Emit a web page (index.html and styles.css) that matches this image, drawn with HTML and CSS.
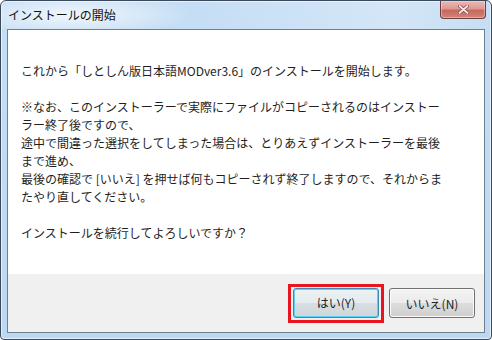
FILE: index.html
```html
<!DOCTYPE html>
<html lang="ja">
<head>
    <meta charset="UTF-8">
    <title>インストールの開始</title>
    <link rel="stylesheet" href="styles.css">
</head>
<body>
    <div class="window">
        <header class="titlebar">
            <span class="title">インストールの開始</span>
            <div class="close">
                <svg width="11" height="9" viewBox="0 0 11 9">
                    <path d="M1.5 1 L9.5 8 M9.5 1 L1.5 8" stroke="#8a4a45" stroke-width="3.4" stroke-linecap="round"/>
                    <path d="M1.5 1 L9.5 8 M9.5 1 L1.5 8" stroke="#f4e9e8" stroke-width="1.8" stroke-linecap="round"/>
                </svg>
            </div>
        </header>

        <main class="client">
            <div class="message">
                <p>これから「しとしん版日本語MODver3.6」のインストールを開始します。</p>
                <p>※なお、このインストーラーで実際にファイルがコピーされるのはインストー<br>ラー終了後ですので、<br>途中で間違った選択をしてしまった場合は、とりあえずインストーラーを最後<br>まで進め、<br>最後の確認で [いいえ] を押せば何もコピーされず終了しますので、それからま<br>たやり直してください。</p>
                <p>インストールを続行してよろしいですか？</p>
            </div>

            <div class="footer">
                <span class="highlight">
                    <button class="btn btn-default">はい(Y)</button>
                </span>
                <button class="btn">いいえ(N)</button>
            </div>
        </main>
    </div>
</body>
</html>
```

FILE: styles.css
```css
body {
    margin: 0;
    font-family: "Noto Sans CJK JP", "Noto Sans", sans-serif;
    font-size: 12px;
}

.window {
    width: 492px;
    height: 340px;
    box-sizing: border-box;
    border: 1px solid #3a4a5a;
    border-radius: 6px 6px 4px 4px;
    background: linear-gradient(#c6def5, #bcd8f2);
    box-shadow: inset 0 0 0 1px #e4f0fb;
    display: flex;
    flex-direction: column;
    overflow: hidden;
}

.titlebar {
    height: 28px;
    display: flex;
    justify-content: space-between;
    align-items: flex-start;
    background:
        radial-gradient(ellipse 120px 22px at 70px 14px, rgba(255, 255, 255, 0.75), rgba(255, 255, 255, 0) 100%),
        linear-gradient(90deg, rgba(255, 255, 255, 0) 40%, rgba(255, 255, 255, 0.25) 80%, rgba(255, 255, 255, 0) 100%);
}
.title {
    padding: 6px 0 0 7px;
    line-height: 16px;
    color: #111;
}

.close {
    width: 46px;
    height: 18px;
    margin-right: 5px;
    box-sizing: border-box;
    border: 1px solid #6e3d3a;
    border-top: none;
    border-radius: 0 0 4px 4px;
    background: linear-gradient(#ebb9b3, #dc9a93 45%, #c8685f 55%, #d0847c);
    box-shadow: inset 0 0 0 1px rgba(255, 225, 220, 0.45);
    display: flex;
    align-items: center;
    justify-content: center;
}

.client {
    flex: 1;
    margin: 0 6px 6px;
    border: 1px solid #6e7f90;
    background: #fff;
    display: flex;
    flex-direction: column;
}

.message {
    flex: 1;
    padding: 32px 13px 0;
    line-height: 18px;
    color: #1e1e1e;
    white-space: nowrap;
}
.message p {
    margin: 0 0 18px;
}

.footer {
    height: 58px;
    background: #f0f0f0;
    display: flex;
    justify-content: flex-end;
    align-items: center;
    gap: 5px;
    padding-right: 9px;
}

.highlight {
    display: flex;
    padding: 1px 2px 2px;
    border: 3px solid #e8141e;
}

.btn {
    width: 86px;
    height: 30px;
    box-sizing: border-box;
    padding: 0;
    border: 1px solid #707070;
    border-radius: 3px;
    background: linear-gradient(#f2f2f2, #ebebeb 49%, #dddddd 50%, #cfcfcf);
    box-shadow: inset 0 0 0 1px #fbfbfb;
    font: inherit;
    color: #1e1e1e;
}
.btn-default {
    border-color: #3c86b8;
    background: linear-gradient(#edf2f4, #e5ebee 49%, #d8dfe2 50%, #cfd6d9);
    box-shadow: inset 0 0 0 1px #5fd2f6;
}
```
